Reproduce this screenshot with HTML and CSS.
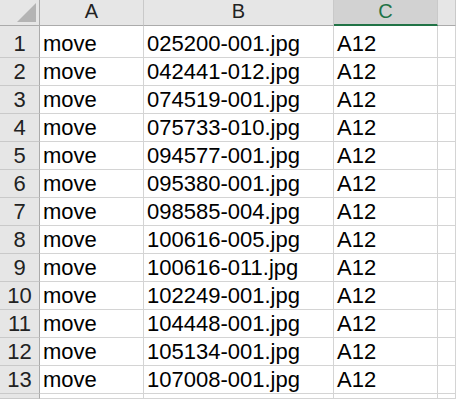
FILE: index.html
```
<!doctype html>
<html>
<head>
<meta charset="utf-8">
<title>Sheet1</title>
<link rel="stylesheet" href="styles.css">
</head>
<body>
<div class="sheet">
  <div class="hd corner"><span class="tri"></span></div>
  <div class="hd col">A</div>
  <div class="hd col">B</div>
  <div class="hd col sel">C</div>
  <div class="hd col"></div>

  <div class="rh">1</div><div class="c">move</div><div class="c">025200-001.jpg</div><div class="c">A12</div><div class="c"></div>
  <div class="rh">2</div><div class="c">move</div><div class="c">042441-012.jpg</div><div class="c">A12</div><div class="c"></div>
  <div class="rh">3</div><div class="c">move</div><div class="c">074519-001.jpg</div><div class="c">A12</div><div class="c"></div>
  <div class="rh">4</div><div class="c">move</div><div class="c">075733-010.jpg</div><div class="c">A12</div><div class="c"></div>
  <div class="rh">5</div><div class="c">move</div><div class="c">094577-001.jpg</div><div class="c">A12</div><div class="c"></div>
  <div class="rh">6</div><div class="c">move</div><div class="c">095380-001.jpg</div><div class="c">A12</div><div class="c"></div>
  <div class="rh">7</div><div class="c">move</div><div class="c">098585-004.jpg</div><div class="c">A12</div><div class="c"></div>
  <div class="rh">8</div><div class="c">move</div><div class="c">100616-005.jpg</div><div class="c">A12</div><div class="c"></div>
  <div class="rh">9</div><div class="c">move</div><div class="c">100616-011.jpg</div><div class="c">A12</div><div class="c"></div>
  <div class="rh">10</div><div class="c">move</div><div class="c">102249-001.jpg</div><div class="c">A12</div><div class="c"></div>
  <div class="rh">11</div><div class="c">move</div><div class="c">104448-001.jpg</div><div class="c">A12</div><div class="c"></div>
  <div class="rh">12</div><div class="c">move</div><div class="c">105134-001.jpg</div><div class="c">A12</div><div class="c"></div>
  <div class="rh">13</div><div class="c">move</div><div class="c">107008-001.jpg</div><div class="c">A12</div><div class="c"></div>
  <div class="rh"></div><div class="c"></div><div class="c"></div><div class="c"></div><div class="c"></div>
</div>
</body>
</html>
```
FILE: styles.css
```
html, body
{
	margin: 0;
	padding: 0;
	background: #fff;
	overflow: hidden;
}
.sheet
{
	display: grid;
	grid-template-columns: 40px 104px 190px 104px 1fr;
	grid-template-rows: 26px 32px repeat(12, 28px) 5px;
	width: 456px;
	height: 399px;
	font-family: "Liberation Sans", Arial, sans-serif;
	font-size: 22px;
	color: #000;
}
.sheet > div
{
	box-sizing: border-box;
	display: flex;
	align-items: flex-end;
	overflow: hidden;
	white-space: nowrap;
	line-height: 25px;
}
.hd
{
	background: #e6e6e6;
	border-right: 1px solid #c9c9c9;
	border-bottom: 1px solid #ababab;
	justify-content: center;
	padding-bottom: 1px;
	font-size: 20px;
	line-height: 23px;
	color: #222;
}
.corner
{
	justify-content: flex-end;
	padding: 0 3px 3px 0;
	border-right-color: #ababab;
}
.tri
{
	width: 19px;
	height: 19px;
	background: #b4b4b4;
	clip-path: polygon(100% 0, 100% 100%, 0 100%);
}
.sel
{
	background: #d2d2d2;
	color: #217346;
	border-bottom: 2px solid #217346;
	padding-bottom: 0;
}
.rh
{
	background: #e6e6e6;
	border-right: 1px solid #ababab;
	border-bottom: 1px solid #c9c9c9;
	justify-content: center;
	padding-bottom: 1px;
	color: #222;
}
.c
{
	border-right: 1px solid #d4d4d4;
	border-bottom: 1px solid #d4d4d4;
	padding: 0 0 1px 3px;
}
```
